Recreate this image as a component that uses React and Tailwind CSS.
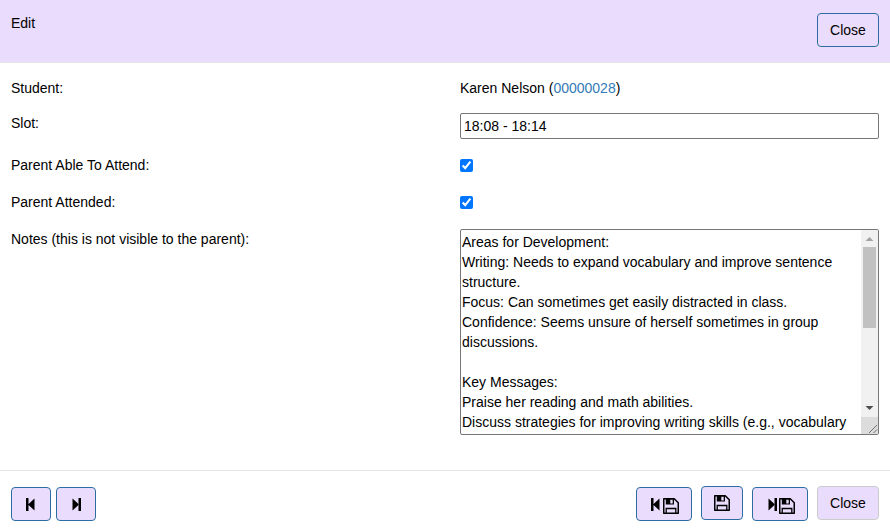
import { useState } from "react";

const NOTES = `Areas for Development:
Writing: Needs to expand vocabulary and improve sentence structure.
Focus: Can sometimes get easily distracted in class.
Confidence: Seems unsure of herself sometimes in group discussions.

Key Messages:
Praise her reading and math abilities.
Discuss strategies for improving writing skills (e.g., vocabulary`;

export default function App() {
  const [slot, setSlot] = useState("18:08 - 18:14");
  const [able, setAble] = useState(true);
  const [attended, setAttended] = useState(true);
  const [notes, setNotes] = useState(NOTES);

  return (
    <div className="bg-white font-['Liberation_Sans',Arial,sans-serif] text-sm/5 text-black">
      <header className="flex items-start justify-between border-b border-[#e5e5e5] bg-[#eadcfc] px-[11px] pt-[13px] pb-[15px]">
        <h1>Edit</h1>
        <Button className="w-[62px] border-[#2e6da4]">Close</Button>
      </header>

      <form className="flex flex-col gap-[15px] px-[11px] pt-[15px] pb-[35px]">
        <div className="grid grid-cols-2 gap-[30px]">
          <span>Student:</span>
          <span>
            Karen Nelson (
            <a href="#student" className="text-[#337ab7]">
              00000028
            </a>
            )
          </span>
        </div>
        <div className="grid grid-cols-2 gap-[30px]">
          <label htmlFor="slot">Slot:</label>
          <input
            id="slot"
            type="text"
            value={slot}
            onChange={(e) => setSlot(e.target.value)}
            className="mb-px h-[26px] w-full rounded-xs border border-[#767676] px-[3px]"
          />
        </div>
        <CheckRow
          id="able"
          label="Parent Able To Attend:"
          checked={able}
          onChange={setAble}
        />
        <CheckRow
          id="attended"
          label="Parent Attended:"
          checked={attended}
          onChange={setAttended}
        />
        <div className="grid grid-cols-2 gap-[30px]">
          <label htmlFor="notes">Notes (this is not visible to the parent):</label>
          <div className="flex h-[206px] overflow-hidden rounded-xs border border-[#767676]">
            <textarea
              id="notes"
              value={notes}
              onChange={(e) => setNotes(e.target.value)}
              className="min-w-0 flex-1 resize-none overflow-hidden px-px py-[2px] outline-none"
            />
            <ScrollBar />
          </div>
        </div>
      </form>

      <footer className="flex justify-between border-t border-[#e5e5e5] px-[11px] pt-[15px] pb-[11px]">
        <div className="flex items-end gap-[5px]">
          <Button label="Previous" className="w-10 border-[#2e6da4]">
            <PrevIcon />
          </Button>
          <Button label="Next" className="w-10 border-[#2e6da4]">
            <NextIcon />
          </Button>
        </div>
        <div className="flex gap-[9px]">
          <Button
            label="Save and previous"
            className="mt-px w-14 gap-[2px] border-[#2e6da4] pl-[2px]"
          >
            <PrevIcon />
            <SaveIcon className="mt-1" />
          </Button>
          <Button label="Save" className="mb-px w-[42px] border-[#2e6da4]">
            <SaveIcon />
          </Button>
          <Button
            label="Save and next"
            className="mt-px w-14 gap-[2px] border-[#2e6da4] pl-[2px]"
          >
            <NextIcon />
            <SaveIcon className="mt-1" />
          </Button>
          <Button className="mb-px w-[62px] border-[#cccccc]">Close</Button>
        </div>
      </footer>
    </div>
  );
}

function Button({ label, className, children }) {
  return (
    <button
      type="button"
      aria-label={label}
      className={`flex h-[34px] items-center justify-center rounded border bg-[#eadcfc] ${className}`}
    >
      {children}
    </button>
  );
}

function CheckRow({ id, label, checked, onChange }) {
  return (
    <div className="grid h-[22px] grid-cols-2 gap-[30px]">
      <label htmlFor={id}>{label}</label>
      <input
        id={id}
        type="checkbox"
        checked={checked}
        onChange={(e) => onChange(e.target.checked)}
        className="mt-1 size-[13px] accent-[#0075ff]"
      />
    </div>
  );
}

function ScrollBar() {
  return (
    <div aria-hidden="true" className="flex w-[17px] flex-col bg-[#f1f1f1]">
      <svg viewBox="0 0 17 17" className="size-[17px] shrink-0">
        <path d="M4.500 11h8l-4-4z" fill="#a3a3a3" />
      </svg>
      <div className="mx-[2px] h-[81px] bg-[#c1c1c1]" />
      <svg viewBox="0 0 17 17" className="mt-auto size-[17px] shrink-0">
        <path d="M4.500 6h8l-4 4z" fill="#505050" />
      </svg>
      <svg viewBox="0 0 17 17" className="size-[17px] shrink-0 bg-[#dcdcdc]">
        <path d="M8 16 16 8M12.500 16l3.500-3.500" stroke="#707070" fill="none" />
      </svg>
    </div>
  );
}

function PrevIcon() {
  return (
    <svg viewBox="0 0 10 13" className="h-[13px] w-[10px] shrink-0">
      <path d="M0 0h2.500v13H0zM8.500 .5v12L2 6.500z" />
    </svg>
  );
}

function NextIcon() {
  return (
    <svg viewBox="0 0 10 13" className="h-[13px] w-[10px] shrink-0">
      <path d="M7.500 0H10v13H7.500zM1.500 .5v12L8 6.500z" />
    </svg>
  );
}

function SaveIcon({ className = "" }) {
  return (
    <svg viewBox="0 0 16 16" className={`size-4 shrink-0 ${className}`}>
      <path
        d="M.75.75h10.500l4 4v10.500H.75z"
        fill="none"
        stroke="#000"
        strokeWidth="1.500"
        strokeLinejoin="round"
      />
      <path d="M2.800 .5H11v6H2.800zM7.300 1.500v4h2.400v-4z" fillRule="evenodd" />
      <path d="M3.200 15v-4.500h9.600V15" fill="none" stroke="#000" strokeWidth="1.300" />
    </svg>
  );
}
